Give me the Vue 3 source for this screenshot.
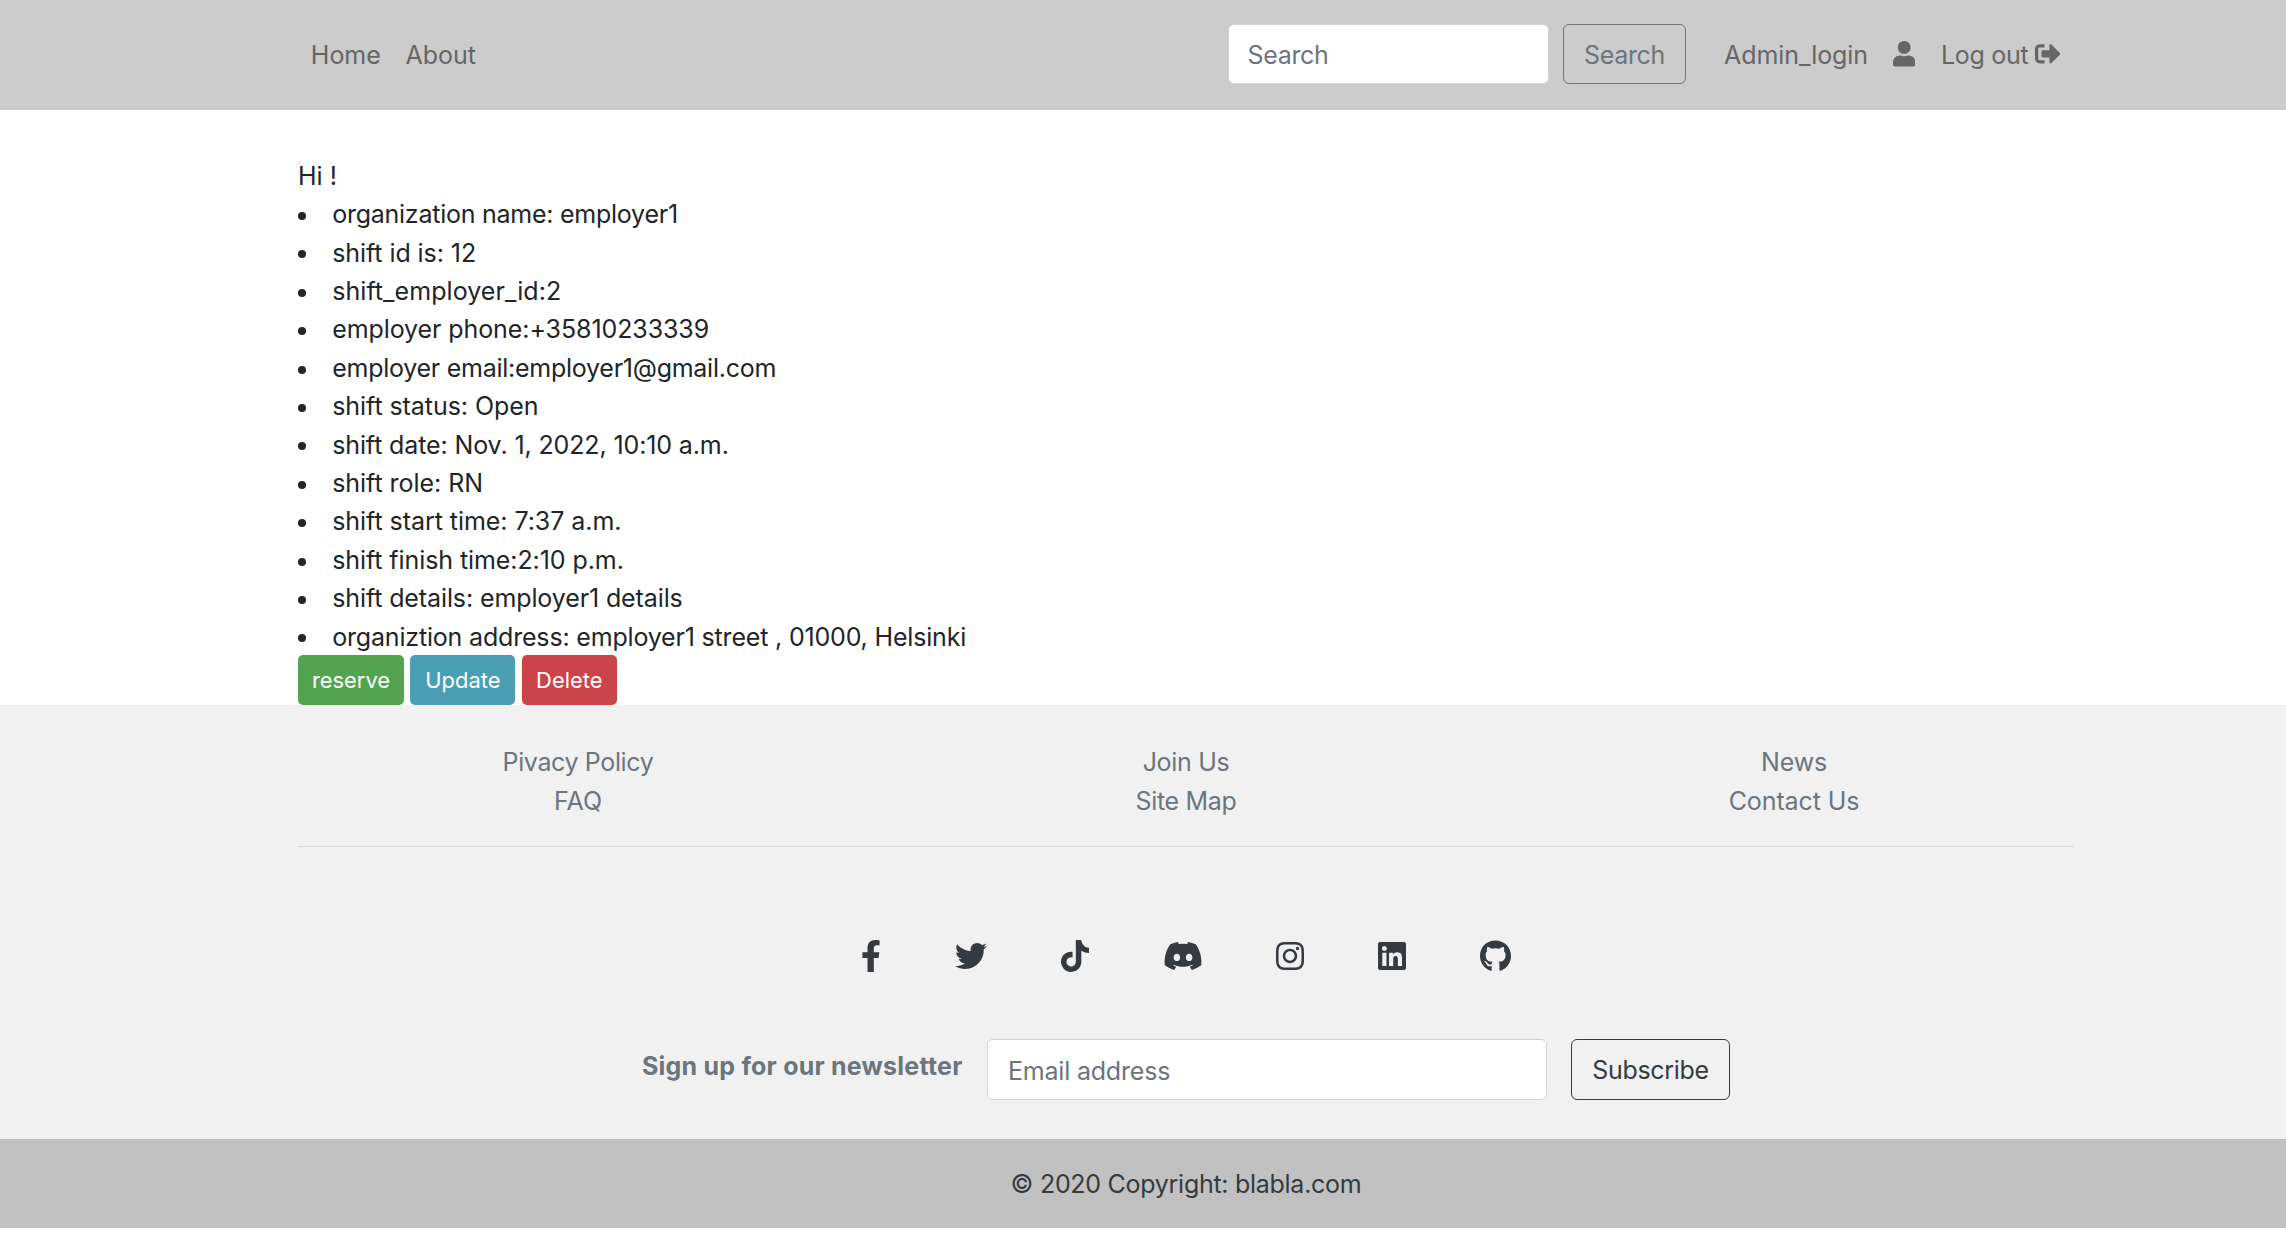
<script setup>
const details = [
  { text: 'organization name: employer1', ls: -0.25 },
  { text: 'shift id is: 12', ls: -0.07 },
  { text: 'shift_employer_id:2', ls: 0.06 },
  { text: 'employer phone:+35810233339', ls: -0.09 },
  { text: 'employer email:employer1@gmail.com', ls: -0.26 },
  { text: 'shift status: Open', ls: -0.06 },
  { text: 'shift date: Nov. 1, 2022, 10:10 a.m.', ls: -0.12 },
  { text: 'shift role: RN', ls: -0.04 },
  { text: 'shift start time: 7:37 a.m.', ls: -0.05 },
  { text: 'shift finish time:2:10 p.m.', ls: -0.08 },
  { text: 'shift details: employer1 details', ls: -0.11 },
  { text: 'organiztion address: employer1 street , 01000, Helsinki', ls: -0.18 },
]
const columns = [
  [{ text: 'Pivacy Policy', ls: -0.37 }, { text: 'FAQ', ls: 0 }],
  [{ text: 'Join Us', ls: -0.32 }, { text: 'Site Map', ls: -0.3 }],
  [{ text: 'News', ls: -0.1 }, { text: 'Contact Us', ls: -0.1 }],
]
const socials = [
  { name: 'Facebook', w: 320, d: 'M279.14 288l14.22-92.66h-88.91v-60.13c0-25.35 12.42-50.06 52.24-50.06h40.42V6.26S260.43 0 225.36 0c-73.22 0-121.08 44.38-121.08 124.72v70.62H22.89V288h81.39v224h100.17V288z' },
  { name: 'Twitter', w: 512, d: 'M459.37 151.716c.325 4.548.325 9.097.325 13.645 0 138.72-105.583 298.558-298.558 298.558-59.452 0-114.68-17.219-161.137-47.106 8.447.974 16.568 1.299 25.34 1.299 49.055 0 94.213-16.568 130.274-44.832-46.132-.975-84.792-31.188-98.112-72.772 6.498.974 12.995 1.624 19.818 1.624 9.421 0 18.843-1.3 27.614-3.573-48.081-9.747-84.143-51.98-84.143-102.985v-1.299c13.969 7.797 30.214 12.67 47.431 13.319-28.264-18.843-46.781-51.005-46.781-87.391 0-19.492 5.197-37.36 14.294-52.954 51.655 63.675 129.3 105.258 216.365 109.807-1.624-7.797-2.599-15.918-2.599-24.04 0-57.828 46.782-104.934 104.934-104.934 30.213 0 57.502 12.67 76.67 33.137 23.715-4.548 46.456-13.32 66.599-25.34-7.798 24.366-24.366 44.833-46.132 57.827 21.117-2.273 41.584-8.122 60.426-16.243-14.292 20.791-32.161 39.308-52.628 54.253z' },
  { name: 'TikTok', w: 448, d: 'M448,209.91a210.06,210.06,0,0,1-122.77-39.25V349.38A162.55,162.55,0,1,1,185,188.31V278.2a74.62,74.62,0,1,0,52.23,71.18V0l88,0a121.18,121.18,0,0,0,1.86,22.17h0A122.18,122.18,0,0,0,381,102.39a121.43,121.43,0,0,0,67,20.14Z' },
  { name: 'Discord', w: 640, d: 'M524.531,69.836a1.5,1.5,0,0,0-.764-.7A485.065,485.065,0,0,0,404.081,32.03a1.816,1.816,0,0,0-1.923.91,337.461,337.461,0,0,0-14.9,30.6,447.848,447.848,0,0,0-134.426,0,309.541,309.541,0,0,0-15.135-30.6,1.89,1.89,0,0,0-1.924-.91A483.689,483.689,0,0,0,116.085,69.137a1.712,1.712,0,0,0-.788.676C39.068,183.651,18.186,294.69,28.43,404.354a2.016,2.016,0,0,0,.765,1.375A487.666,487.666,0,0,0,176.02,479.918a1.9,1.9,0,0,0,2.063-.676A348.2,348.2,0,0,0,208.12,430.4a1.86,1.86,0,0,0-1.019-2.588,321.173,321.173,0,0,1-45.868-21.853,1.885,1.885,0,0,1-.185-3.126c3.082-2.309,6.166-4.711,9.109-7.137a1.819,1.819,0,0,1,1.9-.256c96.229,43.917,200.41,43.917,295.5,0a1.812,1.812,0,0,1,1.924.233c2.944,2.426,6.027,4.851,9.132,7.16a1.884,1.884,0,0,1-.162,3.126,301.407,301.407,0,0,1-45.89,21.83,1.875,1.875,0,0,0-1,2.611,391.055,391.055,0,0,0,30.014,48.815,1.864,1.864,0,0,0,2.063.7A486.048,486.048,0,0,0,610.7,405.729a1.882,1.882,0,0,0,.765-1.352C623.729,277.594,590.933,167.465,524.531,69.836ZM222.491,337.58c-28.972,0-52.844-26.587-52.844-59.239S193.056,219.1,222.491,219.1c29.665,0,53.306,26.82,52.843,59.239C275.334,310.993,251.924,337.58,222.491,337.58Zm195.38,0c-28.971,0-52.843-26.587-52.843-59.239S388.437,219.1,417.871,219.1c29.667,0,53.307,26.82,52.844,59.239C470.715,310.993,447.538,337.58,417.871,337.58Z' },
  { name: 'Instagram', w: 448, d: 'M224.1 141c-63.6 0-114.9 51.3-114.9 114.9s51.3 114.9 114.9 114.9S339 319.5 339 255.9 287.7 141 224.1 141zm0 189.6c-41.1 0-74.7-33.5-74.7-74.7s33.5-74.7 74.7-74.7 74.7 33.5 74.7 74.7-33.6 74.7-74.7 74.7zm146.4-194.3c0 14.9-12 26.8-26.8 26.8-14.9 0-26.8-12-26.8-26.8s12-26.8 26.8-26.8 26.8 12 26.8 26.8zm76.1 27.2c-1.7-35.9-9.9-67.7-36.2-93.9-26.2-26.2-58-34.4-93.9-36.2-37-2.1-147.9-2.1-184.9 0-35.8 1.7-67.6 9.9-93.9 36.1s-34.4 58-36.2 93.9c-2.1 37-2.1 147.9 0 184.9 1.7 35.9 9.9 67.7 36.2 93.9s58 34.4 93.9 36.2c37 2.1 147.9 2.1 184.9 0 35.9-1.7 67.7-9.9 93.9-36.2 26.2-26.2 34.4-58 36.2-93.9 2.1-37 2.1-147.8 0-184.8zM398.8 388c-7.8 19.6-22.9 34.7-42.6 42.6-29.5 11.7-99.5 9-132.1 9s-102.7 2.6-132.1-9c-19.6-7.8-34.7-22.9-42.6-42.6-11.7-29.5-9-99.5-9-132.1s-2.6-102.7 9-132.1c7.8-19.6 22.9-34.7 42.6-42.6 29.5-11.7 99.5-9 132.1-9s102.7-2.6 132.1 9c19.6 7.8 34.7 22.9 42.6 42.6 11.7 29.5 9 99.5 9 132.1s2.7 102.7-9 132.1z' },
  { name: 'LinkedIn', w: 448, d: 'M416 32H31.9C14.3 32 0 46.5 0 64.3v383.4C0 465.5 14.3 480 31.9 480H416c17.6 0 32-14.5 32-32.3V64.3c0-17.8-14.4-32.3-32-32.3zM135.4 416H69V202.2h66.5V416zm-33.2-243c-21.3 0-38.5-17.3-38.5-38.5S80.9 96 102.2 96c21.2 0 38.5 17.3 38.5 38.5 0 21.3-17.2 38.5-38.5 38.5zm282.1 243h-66.4V312c0-24.8-.5-56.7-34.5-56.7-34.6 0-39.9 27-39.9 54.9V416h-66.4V202.2h63.7v29.2h.9c8.9-16.8 30.6-34.5 62.9-34.5 67.2 0 79.7 44.3 79.7 101.9V416z' },
  { name: 'GitHub', w: 496, d: 'M165.9 397.4c0 2-2.3 3.6-5.2 3.6-3.3.3-5.6-1.3-5.6-3.6 0-2 2.3-3.6 5.2-3.6 3-.3 5.6 1.3 5.6 3.6zm-31.1-4.5c-.7 2 1.3 4.3 4.3 4.9 2.6 1 5.6 0 6.2-2s-1.3-4.3-4.3-5.2c-2.6-.7-5.5.3-6.2 2.3zm44.2-1.7c-2.9.7-4.9 2.6-4.6 4.9.3 2 2.9 3.3 5.9 2.6 2.9-.7 4.9-2.6 4.6-4.6-.3-1.9-3-3.2-5.9-2.9zM244.8 8C106.1 8 0 113.3 0 252c0 110.9 69.8 205.8 169.5 239.2 12.8 2.3 17.3-5.6 17.3-12.1 0-6.2-.3-40.4-.3-61.4 0 0-70 15-84.7-29.8 0 0-11.4-29.1-27.8-36.6 0 0-22.9-15.7 1.6-15.4 0 0 24.9 2 38.6 25.8 21.9 38.6 58.6 27.5 72.9 20.9 2.3-16 8.8-27.1 16-33.7-55.9-6.2-112.3-14.3-112.3-110.5 0-27.5 7.6-41.3 23.6-58.9-2.6-6.5-11.1-33.3 2.6-67.9 20.9-6.5 69 27 69 27 20-5.6 41.5-8.5 62.8-8.5s42.8 2.9 62.8 8.5c0 0 48.1-33.6 69-27 13.7 34.7 5.2 61.4 2.6 67.9 16 17.7 25.8 31.5 25.8 58.9 0 96.5-58.9 104.2-114.8 110.5 9.2 7.9 17 22.9 17 46.4 0 33.7-.3 75.4-.3 83.6 0 6.5 4.6 14.4 17.3 12.1C428.2 457.8 496 362.9 496 252 496 113.3 383.5 8 244.8 8z' },
]
</script>

<template>
  <div class="page">
    <header class="navbar">
      <div class="container bar">
        <nav class="links">
          <a class="home">Home</a>
          <a class="about">About</a>
        </nav>
        <form class="search" @submit.prevent>
          <input class="field search-field" type="search" placeholder="Search" aria-label="Search">
          <button class="btn btn-secondary" type="submit">Search</button>
        </form>
        <nav class="account">
          <a class="login">Admin_login</a>
          <a class="user" aria-label="Profile">
            <svg width="22.4" height="25.6" viewBox="0 0 448 512"><path d="M224 256c70.7 0 128-57.3 128-128S294.7 0 224 0 96 57.3 96 128s57.3 128 128 128zm89.6 32h-16.7c-22.2 10.2-46.9 16-72.9 16s-50.6-5.8-72.9-16h-16.7C60.2 288 0 348.2 0 422.4V464c0 26.5 21.5 48 48 48h352c26.5 0 48-21.5 48-48v-41.6c0-74.2-60.2-134.4-134.4-134.4z" /></svg>
          </a>
          <a class="logout">
            <span>Log out</span>
            <svg width="25.6" height="25.6" viewBox="0 0 512 512"><path d="M497 273L329 441c-15 15-41 4.5-41-17v-96H152c-13.3 0-24-10.7-24-24v-96c0-13.3 10.7-24 24-24h136V88c0-21.4 25.9-32 41-17l168 168c9.3 9.4 9.3 24.6 0 34zM192 436v-40c0-6.6-5.4-12-12-12H96c-17.7 0-32-14.3-32-32V160c0-17.7 14.3-32 32-32h84c6.6 0 12-5.4 12-12V76c0-6.6-5.4-12-12-12H96c-53 0-96 43-96 96v192c0 53 43 96 96 96h84c6.6 0 12-5.4 12-12z" /></svg>
          </a>
        </nav>
      </div>
    </header>

    <main class="container content">
      <p class="greeting">Hi !</p>
      <ul class="details">
        <li v-for="d in details" :key="d.text"><span :style="{ letterSpacing: d.ls + 'px' }">{{ d.text }}</span></li>
      </ul>
      <div class="actions">
        <button class="action reserve">reserve</button>
        <button class="action update">Update</button>
        <button class="action delete">Delete</button>
      </div>
    </main>

    <footer class="footer">
      <div class="container">
        <div class="columns">
          <div v-for="(col, i) in columns" :key="i" class="column">
            <a v-for="link in col" :key="link.text" :style="{ letterSpacing: link.ls + 'px' }">{{ link.text }}</a>
          </div>
        </div>
        <hr class="rule">
        <div class="socials">
          <a v-for="s in socials" :key="s.name" :aria-label="s.name">
            <svg :width="s.w / 16" height="32" :viewBox="`0 0 ${s.w} 512`"><path :d="s.d" /></svg>
          </a>
        </div>
        <form class="newsletter" @submit.prevent>
          <strong>Sign up for our newsletter</strong>
          <input class="field email-field" type="email" placeholder="Email address" aria-label="Email address">
          <button class="btn btn-dark" type="submit">Subscribe</button>
        </form>
      </div>
      <div class="copyright"><div class="container">© 2020 Copyright: blabla.com</div></div>
    </footer>
  </div>
</template>

<style>
body {
  background: #fff;
  overflow: hidden;
}
</style>

<style scoped>
.page {
  width: 2286px;
  overflow: hidden;
  font-family: Inter, "Liberation Sans", sans-serif;
  font-size: 25px;
  line-height: 38.4px;
  color: #212529;
}
.page *,
.page *::before {
  box-sizing: border-box;
}
svg {
  display: block;
  fill: currentColor;
}
.container {
  width: 1824px;
  margin-left: 274px;
  padding: 0 24px;
}
.navbar {
  height: 110px;
  background: #ccc;
  color: #666;
}
.bar {
  display: flex;
  align-items: center;
  height: 108px;
}
.links {
  display: flex;
  width: 930px;
  padding: 2px 0 0 12.8px;
}
.home {
  width: 94.6px;
}
.search {
  display: flex;
  gap: 14px;
}
.field {
  height: 61px;
  margin: 0;
  padding: 2px 20px 0;
  border: 1px solid #ced4da;
  border-radius: 6px;
  background: #fff;
  font: inherit;
  letter-spacing: -0.2px;
  color: #495057;
}
.field::placeholder {
  color: #6c757d;
  opacity: 1;
}
.search-field {
  width: 321px;
  height: 60px;
  padding-left: 18.6px;
  letter-spacing: -0.35px;
}
.btn {
  margin: 0;
  padding: 2px 0 0;
  border: 1px solid;
  border-radius: 6px;
  background: transparent;
  font: inherit;
  letter-spacing: -0.3px;
  text-align: center;
}
.btn-secondary {
  width: 123px;
  height: 60px;
  color: #6c757d;
}
.btn-dark {
  width: 159px;
  height: 61px;
  color: #343a40;
}
.account {
  display: flex;
  align-items: center;
  margin-left: 38px;
}
.login {
  width: 169px;
  padding-top: 2px;
  letter-spacing: -0.06px;
}
.user {
  width: 48px;
}
.logout {
  display: flex;
  align-items: center;
}
.logout span {
  width: 94px;
  padding-top: 2px;
  letter-spacing: -0.3px;
  white-space: nowrap;
}
.content {
  height: 595px;
  padding-top: 46.8px;
}
.greeting {
  margin: 0;
}
.details {
  margin: 0;
  padding: 0;
  list-style: none;
}
.details li {
  display: flex;
  align-items: center;
  white-space: nowrap;
}
.details li::before {
  content: "";
  width: 8px;
  height: 8px;
  margin: 3px 26.2px 0 0;
  border-radius: 50%;
  background: #212529;
}
.actions {
  display: flex;
  gap: 6.4px;
  margin-top: -1px;
}
.action {
  height: 50px;
  margin: 0;
  padding: 0;
  border: 0;
  border-radius: 5px;
  font: inherit;
  font-size: 21.9px;
  color: #fff;
}
.reserve {
  width: 106px;
  background: #53a451;
}
.update {
  width: 105px;
  background: #4a9fb5;
}
.delete {
  width: 95px;
  background: #cb444a;
}
.footer {
  background: #f1f1f1;
}
.columns {
  display: flex;
  margin: 0 -24px;
  padding-top: 38.4px;
}
.column {
  flex: 1;
  display: flex;
  flex-direction: column;
  align-items: center;
  color: #6c757d;
}
.rule {
  height: 1px;
  margin: 25.8px 0 0;
  border: 0;
  background: #d6d8d9;
}
.socials {
  display: flex;
  justify-content: center;
  gap: 73.9px;
  margin-top: 93px;
  color: #343a40;
}
.newsletter {
  display: flex;
  justify-content: center;
  gap: 24px;
  height: 167px;
  padding-top: 67px;
}
.newsletter strong {
  width: 321px;
  height: 38px;
  margin-top: 7.7px;
  letter-spacing: 0.22px;
  color: #6c757d;
  white-space: nowrap;
}
.email-field {
  width: 560px;
}
.copyright {
  height: 89px;
  padding-top: 25.6px;
  background: #c1c1c1;
  color: #343a40;
  letter-spacing: -0.28px;
  text-align: center;
}
</style>
